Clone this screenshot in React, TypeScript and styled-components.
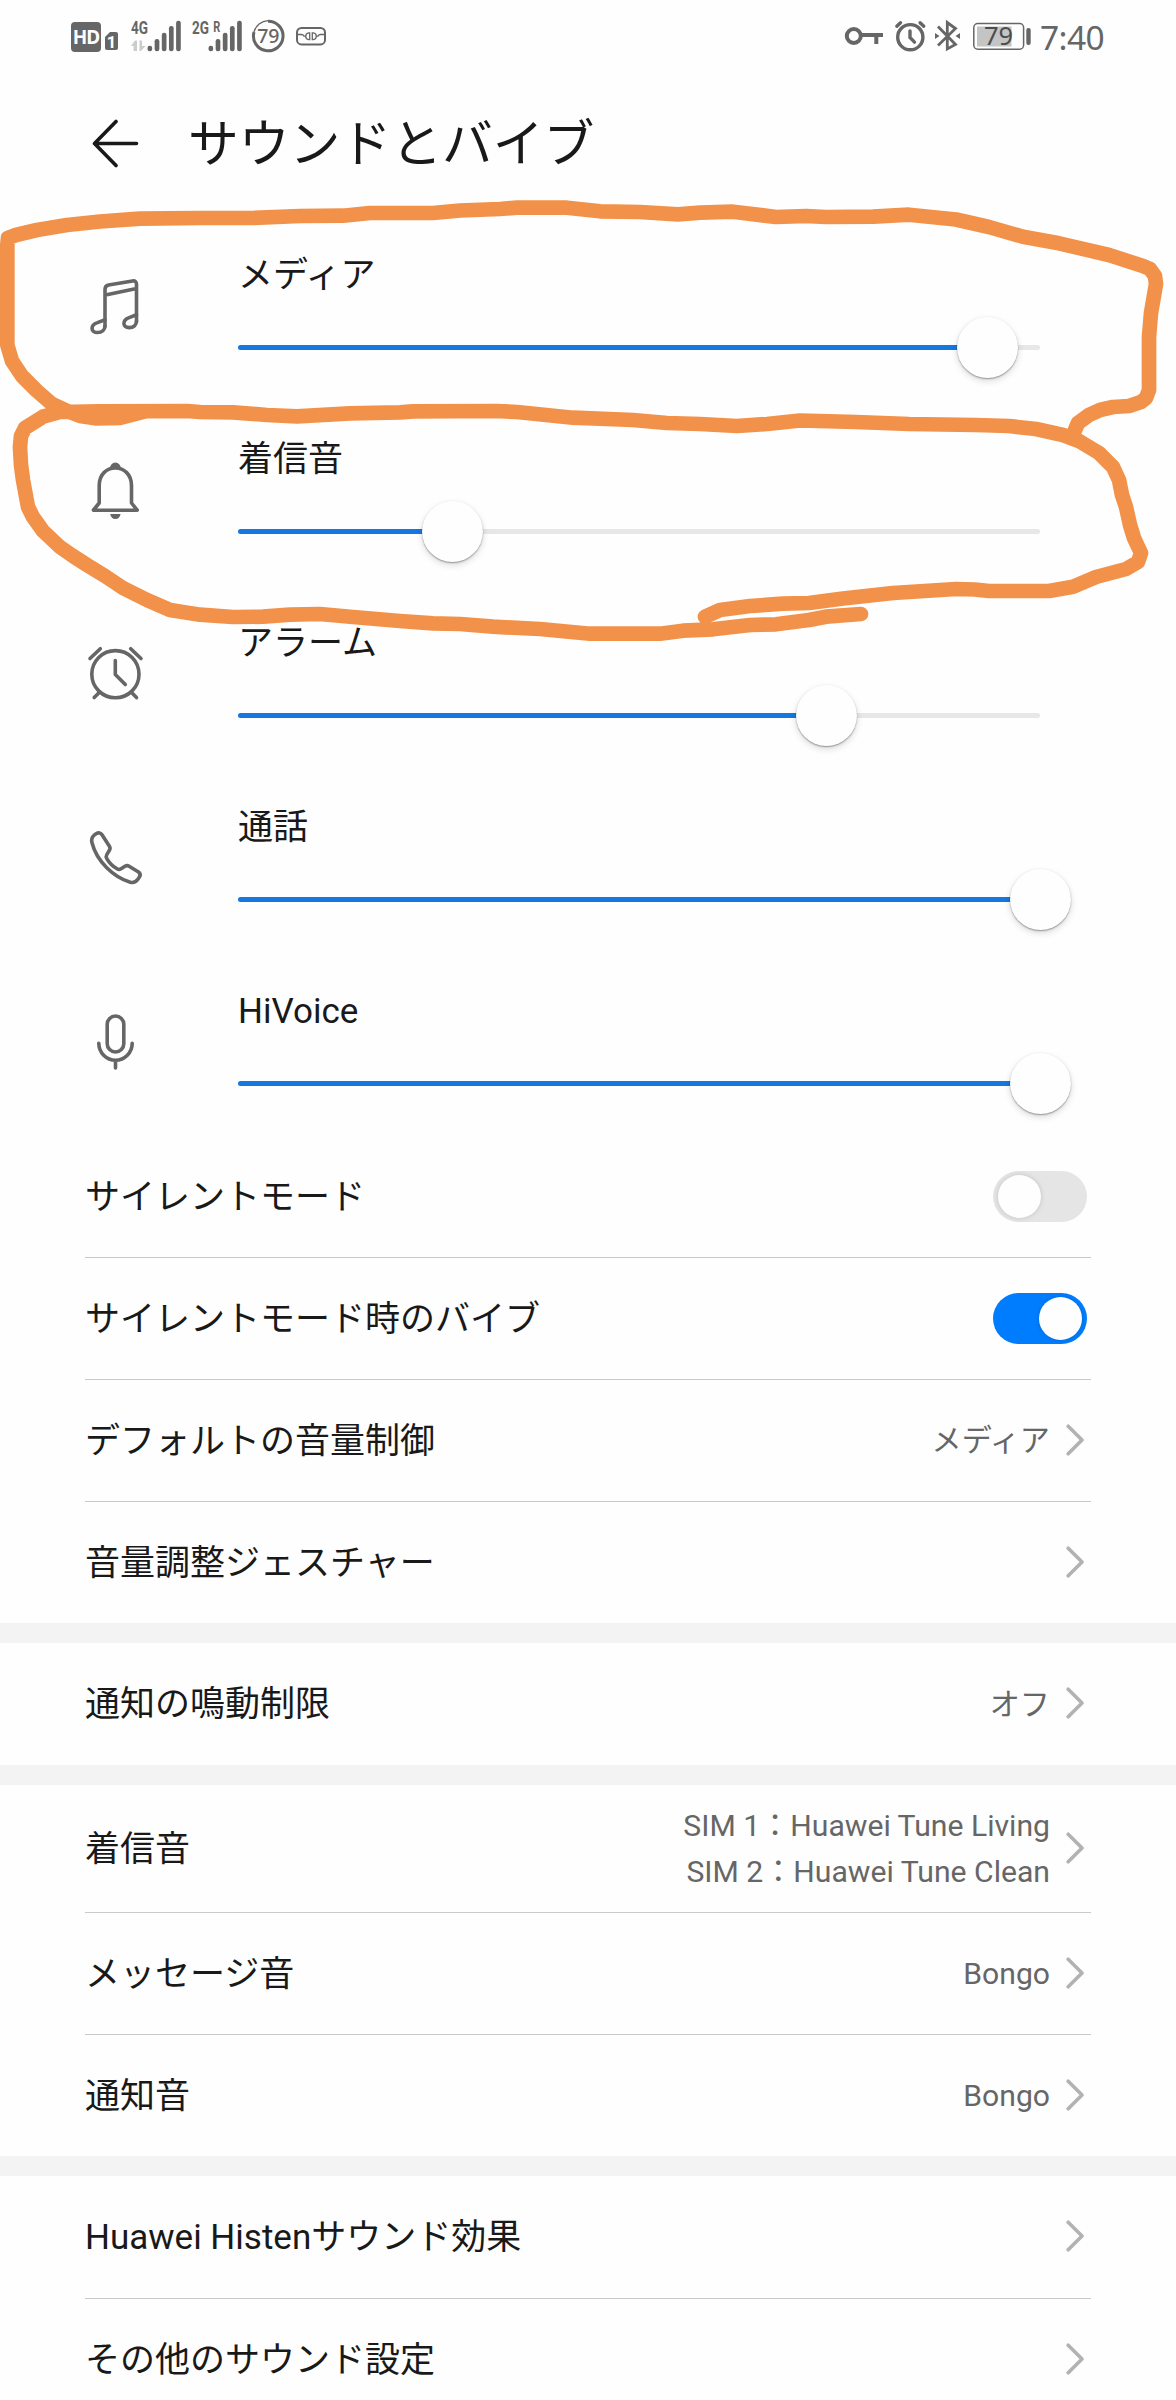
import React from "react";
import styled, { createGlobalStyle } from "styled-components";

const ink = "#191919";
const grey = "#666666";

const GlobalStyle = createGlobalStyle`
  html, body { margin: 0; padding: 0; background: #fefefe; }
  body { font-family: Roboto, "Noto Sans CJK JP", sans-serif; color: ${ink}; }
  * { box-sizing: border-box; }
`;

const Screen = styled.main`
  position: relative;
  width: 1176px;
  height: 2400px;
  overflow: hidden;
  background: #fefefe;
`;

/* ---------- status bar ---------- */

const StatusBar = styled.div`
  height: 72px;
  padding: 0 72px 0 71px;
  display: flex;
  justify-content: space-between;
`;

const StatusGroup = styled.div`
  display: flex;
  align-items: flex-start;
  color: ${grey};
`;

const StatusSvg = styled.svg<{ $gap?: number }>`
  display: block;
  height: 72px;
  margin-left: ${(p) => p.$gap ?? 0}px;
  overflow: visible;
`;

const HdBadge = styled.span`
  margin-top: 22px;
  width: 30px;
  height: 30px;
  border-radius: 4px;
  background: ${grey};
  color: #fefefe;
  font: 700 19px/30px "Noto Sans", sans-serif;
  letter-spacing: -0.9px;
  text-align: center;
`;

const Clock = styled.time`
  margin: 14px 0 0 9px;
  width: 64px;
  white-space: nowrap;
  font: 400 33.5px/46px "Noto Sans", sans-serif;
  letter-spacing: -0.6px;
`;

const barTops = [45.7, 39, 32.7, 26, 20.7];

function Signal({ label, suffix, arrows, gap }: { label: string; suffix?: string; arrows?: boolean; gap: number }) {
  return (
    <StatusSvg $gap={gap} width="50" viewBox="0 0 50 72" fill={grey}>
      <text x="0" y="34" fontFamily="Roboto" fontWeight="700" fontSize="17.5" textLength="17" lengthAdjust="spacingAndGlyphs">
        {label}
      </text>
      {suffix && (
        <text x="21.3" y="32" fontFamily="Roboto" fontWeight="700" fontSize="14.5" textLength="7" lengthAdjust="spacingAndGlyphs">
          {suffix}
        </text>
      )}
      {arrows && <path fill="#cccccc" d="M6 40.5V51H2.600V46H0L4 40.500ZM8.500 51V40.500h2.500V46h3.500L10 51Z" />}
      {barTops.map((top, i) => (
        <rect key={top} x={16.5 + i * 7.15} y={top} width="4.7" height={51.2 - top} rx="2.2" />
      ))}
    </StatusSvg>
  );
}

function StatusLeft() {
  return (
    <StatusGroup>
      <HdBadge>HD</HdBadge>
      <StatusSvg $gap={4.3} width="13" viewBox="0 0 13 72">
        <path fill={grey} d="M5 32h6q2 0 2 2v14q0 2-2 2H2q-2 0-2-2V37Z" />
        <text x="6.6" y="47.6" fill="#fefefe" fontFamily="Roboto" fontWeight="700" fontSize="16.5" textAnchor="middle">1</text>
      </StatusSvg>
      <Signal label="4G" arrows gap={12.7} />
      <Signal label="2G" suffix="R" gap={11.3} />
      <StatusSvg $gap={9.5} width="33" viewBox="0 0 33 72" fill="none" stroke={grey}>
        <path strokeWidth="3" d="M16 21.2A14.8 14.8 0 1 1 2 32" />
        <path strokeWidth="1.3" d="M2 32A15 15 0 0 1 16 20.6" />
        <text x="16.3" y="43.2" fill={grey} stroke="none" fontFamily="Noto Sans" fontWeight="500" fontSize="19.5" textAnchor="middle">79</text>
      </StatusSvg>
      <StatusSvg $gap={11} width="30" viewBox="0 0 30 72" fill="none" stroke={grey}>
        <rect x="1" y="28" width="28" height="16.4" rx="4.5" strokeWidth="2" />
        <path strokeWidth="1.3" d="M1 34.500h4.500q1.500 0 2.500 1.700h2M29 34.500h-4.500q-1.500 0-2.500 1.700h-2M13.700 32.800h-1q-3 .4-3 3.400t3 3.400h1ZM16.300 32.800h1q3 .4 3 3.400t-3 3.400h-1Z" />
      </StatusSvg>
    </StatusGroup>
  );
}

function StatusRight() {
  return (
    <StatusGroup>
      <StatusSvg width="38" viewBox="0 0 38 72" fill="none" stroke={grey} strokeWidth="4">
        <circle cx="8.8" cy="36" r="7" />
        <path d="M16 35h22M31.3 35v9" />
      </StatusSvg>
      <StatusSvg $gap={12} width="31" viewBox="0 0 31 72" fill="none" stroke={grey} strokeWidth="3.4" strokeLinecap="round">
        <circle cx="15.3" cy="37.2" r="12.6" />
        <path d="M15 31v6.5l4.5 4.6" />
        <path d="M1.8 26.2l3.7-3.5M28.8 26.2l-3.7-3.5" />
      </StatusSvg>
      <StatusSvg $gap={9} width="25" viewBox="0 0 25 72" fill="none" stroke={grey} strokeWidth="2.8">
        <path d="M3 26.5l17.5 18L12.3 49V22.5l8.2 6L3 45.5" />
        <path fill={grey} stroke="none" d="M0 33l4.5 3L0 39ZM25 33l-4.5 3 4.5 3Z" />
      </StatusSvg>
      <StatusSvg $gap={13} width="58" viewBox="0 0 58 72">
        <rect x=".8" y="23.6" width="49.8" height="25.6" rx="4" fill="none" stroke={grey} strokeWidth="1.5" />
        <rect x="4" y="26.5" width="34.5" height="20" fill="#c4c4c4" />
        <rect x="53.3" y="28" width="4.4" height="17" rx="2" fill={grey} />
        <text x="25.6" y="45.4" fill="#4d4d4d" fontFamily="Noto Sans" fontSize="25.5" textAnchor="middle">79</text>
      </StatusSvg>
      <Clock>7:40</Clock>
    </StatusGroup>
  );
}

/* ---------- title bar ---------- */

const TitleBar = styled.header`
  height: 144px;
  padding-left: 92px;
  display: flex;
  align-items: center;
`;

const Title = styled.h1`
  margin: 1px 0 0 49px;
  font-size: 50.8px;
  line-height: 76px;
  font-weight: 400;
`;

/* ---------- volume sliders ---------- */

const VolumeRow = styled.section`
  height: 184px;
  padding: 31px 136px 0 85px;
  display: grid;
  grid-template-columns: 60px 1fr;
  column-gap: 93px;
`;

const IconBox = styled.div`
  height: 120px;
  display: flex;
  align-items: center;
  color: ${grey};
`;

const VolumeLabel = styled.div`
  height: 55px;
  padding-top: 3px;
  font-size: 35px;
  line-height: 52px;
`;

const Track = styled.div`
  position: relative;
  margin-top: 43px;
  height: 5px;
  border-radius: 3px;
  background: #e7e7e7;
`;

const Fill = styled.div`
  height: 5px;
  border-radius: 3px;
  background: #1478e1;
`;

const Thumb = styled.div`
  position: absolute;
  top: -28px;
  width: 61px;
  height: 61px;
  margin-left: -30.5px;
  border-radius: 50%;
  background: #fefefe;
  box-shadow: 0 1px 1.5px rgba(0, 0, 0, 0.36), 0 3px 7px rgba(0, 0, 0, 0.14);
`;

const LineIcon = styled.svg.attrs({ width: 60, height: 60 })`
  fill: none;
  stroke: currentColor;
  stroke-width: 3.6;
  stroke-linecap: round;
  stroke-linejoin: round;
`;

const MusicIcon = () => (
  <LineIcon viewBox="0 0 60 60">
    <path d="M20 49.500V12.500q0-3.800 3.500-4.500L47.500 4q4-.6 4 3.300V45M20.500 18L51.500 11.500" />
    <path d="M20 42.800L12.500 45.600C5 48 5.500 55.500 12.500 55.500 17 55.500 20 53 20 49M51.500 37.800L44.200 40.600C37 43.200 37.300 50.600 44.200 50.600 48.700 50.600 51.500 48 51.500 44" />
  </LineIcon>
);

const BellIcon = () => (
  <LineIcon viewBox="0 4 60 60">
    <path d="M14.2 28.5C14.2 17.5 21.5 11 30.3 11S46.500 17.500 46.500 28.500V46l5.700 7.200H8.400L14.200 46Z" />
    <path fill="currentColor" stroke="none" d="M25 11a5.400 5.400 0 0 1 10.800 0ZM25.200 57h10.400q-1 5-5.200 5t-5.200-5Z" />
  </LineIcon>
);

const AlarmIcon = () => (
  <LineIcon viewBox="0 2 60 60">
    <circle cx="30.4" cy="31.2" r="23.6" />
    <path d="M30.3 17.500v14l10 10M5 15.500l10.300-9.800M56 15.500L45.700 5.700M14.500 49.300L9.200 54.600M46.300 49.300l5.200 5.300" />
  </LineIcon>
);

const PhoneIcon = () => (
  <LineIcon viewBox="0.3 1.5 60 60">
    <path d="M9.600 7.500l2.200-1.400c2-1.300 4.300-.8 5.500 1.100l7.400 11.500c.9 1.400.8 2.800 0 4.100l-2.600 4.300c-.8 1.300-.8 2.600 0 4 2.500 4.300 6 7.800 10.200 10.200 1.400.8 2.700.8 4 0l4-2.600c1.400-.8 2.700-.8 4.100 0l9 5.500c2.200 1.300 2.600 3.200 1.300 5.400l-1.500 2.200c-1.800 2.600-4.600 3.700-7.600 3C28.500 49.300 12 33.800 7.300 15.300c-.8-3 .1-5.900 2.300-7.800Z" />
  </LineIcon>
);

const MicIcon = () => (
  <LineIcon viewBox="0 4 60 60">
    <rect x="22.200" y="7" width="16.600" height="36" rx="8.300" />
    <path d="M13.800 34.300a16.700 17 0 0 0 33.400 0M30.500 51.500v7.500" />
  </LineIcon>
);

const volumes = [
  { name: "メディア", level: 93.4, Icon: MusicIcon },
  { name: "着信音", level: 26.7, Icon: BellIcon },
  { name: "アラーム", level: 73.35, Icon: AlarmIcon },
  { name: "通話", level: 100, Icon: PhoneIcon },
  { name: "HiVoice", level: 100, Icon: MicIcon },
];

/* ---------- settings list ---------- */

const Group = styled.section<{ $last?: boolean }>`
  padding: 0 85px;
  border-bottom: ${(p) => (p.$last ? 0 : 20)}px solid #f3f3f3;
`;

const Row = styled.div<{ $height?: number }>`
  height: ${(p) => p.$height ?? 122}px;
  display: flex;
  align-items: center;
  padding-right: 7px;
  &:not(:last-child) {
    border-bottom: 1px solid #c9c9c9;
  }
`;

const RowLabel = styled.span`
  flex: 1;
  padding-top: 2px;
  font-size: 35px;
  line-height: 52px;
`;

const Value = styled.span`
  margin-right: 16px;
  padding-top: 1px;
  color: ${grey};
  font-size: 30.15px;
  line-height: 46px;
  text-align: right;
  white-space: pre-line;
`;

const ChevronSvg = styled.svg`
  display: block;
  margin-bottom: 2px;
`;

const Chevron = () => (
  <ChevronSvg width="18" height="32" viewBox="0 0 18 32" fill="none" stroke="#b2b2b2" strokeWidth="3.6" strokeLinecap="round" strokeLinejoin="round">
    <path d="M2.200 2.200L16 16 2.200 29.800" />
  </ChevronSvg>
);

const Switch = styled.span<{ $on?: boolean }>`
  width: 94px;
  height: 51px;
  margin-right: -3px;
  padding: 0 5px;
  border-radius: 26px;
  display: flex;
  align-items: center;
  justify-content: ${(p) => (p.$on ? "flex-end" : "flex-start")};
  background: ${(p) => (p.$on ? "#007dff" : "#e5e5e5")};
`;

const Knob = styled.span`
  width: 43px;
  height: 43px;
  border-radius: 50%;
  background: #fefefe;
  box-shadow: 0 0 5px rgba(0, 0, 0, 0.16);
`;

/* ---------- freehand marker drawn over the page ---------- */

const Marker = styled.svg`
  position: absolute;
  left: 0;
  top: 0;
  pointer-events: none;
  fill: none;
  stroke: #f29149;
  stroke-width: 14.7;
  stroke-linecap: round;
  stroke-linejoin: round;
`;

const mediaLoop =
  "143,412 120,418 97,418.500 80,416 67,411 52,404 37,391 22,376 12,361 7.300,345 7.300,245 8,238 16,235 37,230 67,225 100,221.500 140,218.700 200,218 253,218 300,216 343,215.700 370,213 433,213 460,210.500 500,209 517,207.700 567,207.700 600,211.300 640,212 678,214.300 700,212.700 733,211.700 776,217 806,216 826,217 873,216.700 909,214.700 956,219.500 989,227 1023,236.700 1059,243.300 1109,255 1143,266 1150,269 1155,276 1156,284 1151,313 1149,337 1149,390 1146,398 1141,402 1129,406 1113,407 1100,410 1089,415 1078,423 1075,430";

const ringLoop =
  "861,614 826,616.700 809,620 776,624.300 750,625 713,629.300 683,630.700 660,633.700 590,633.700 540,629 493,626.700 460,624 433,623.300 400,621 353,617 320,614 290,614.700 263,616.700 233,617 200,614.700 170,610 147,600 123,588 105,576 87,565 73,556 60,547 43,531 33,517 28,507 23,480 21,465 20,447 21,436 25,428 43,416.700 60,412 100,411.300 187,411 200,412 233,412.300 267,415 297,416.300 350,413.300 400,412.300 413,411.300 497,411 517,412 573,417.700 633,420 667,423 700,424 737,426 767,424 800,420.500 856,422 909,424 976,425 1009,426 1036,429 1063,435 1079,441 1099,453 1113,467 1119,480 1122,495 1126,507 1130,525 1134,538 1141,553 1138,562 1126,569 1096,577 1073,586.700 1049,591 989,591 975,589.500 956,589 893,593 843,598.500 809,603 783,603.700 750,606 720,610 705,616.700";

function MarkerStrokes() {
  return (
    <Marker width="1176" height="660" viewBox="0 0 1176 660">
      <polyline points={mediaLoop} />
      <polyline points={ringLoop} />
    </Marker>
  );
}

export default function App() {
  return (
    <Screen lang="ja">
      <GlobalStyle />
      <StatusBar>
        <StatusLeft />
        <StatusRight />
      </StatusBar>

      <TitleBar>
        <svg width="47" height="50" viewBox="0 0 47 50" fill="none" stroke={ink} strokeWidth="3.600" strokeLinecap="round" strokeLinejoin="round">
          <path d="M24 2.500L2.500 24.500 24 46.500M3 24.500h41.500" />
        </svg>
        <Title>サウンドとバイブ</Title>
      </TitleBar>

      {volumes.map(({ name, level, Icon }) => (
        <VolumeRow key={name}>
          <IconBox>
            <Icon />
          </IconBox>
          <div>
            <VolumeLabel>{name}</VolumeLabel>
            <Track>
              <Fill style={{ width: `${level}%` }} />
              <Thumb style={{ left: `${level}%` }} />
            </Track>
          </div>
        </VolumeRow>
      ))}

      <Group>
        <Row>
          <RowLabel>サイレントモード</RowLabel>
          <Switch><Knob /></Switch>
        </Row>
        <Row>
          <RowLabel>サイレントモード時のバイブ</RowLabel>
          <Switch $on><Knob /></Switch>
        </Row>
        <Row>
          <RowLabel>デフォルトの音量制御</RowLabel>
          <Value>メディア</Value>
          <Chevron />
        </Row>
        <Row $height={121}>
          <RowLabel>音量調整ジェスチャー</RowLabel>
          <Chevron />
        </Row>
      </Group>

      <Group>
        <Row>
          <RowLabel>通知の鳴動制限</RowLabel>
          <Value>オフ</Value>
          <Chevron />
        </Row>
      </Group>

      <Group>
        <Row $height={128}>
          <RowLabel>着信音</RowLabel>
          <Value>{"SIM 1：Huawei Tune Living\nSIM 2：Huawei Tune Clean"}</Value>
          <Chevron />
        </Row>
        <Row>
          <RowLabel>メッセージ音</RowLabel>
          <Value>Bongo</Value>
          <Chevron />
        </Row>
        <Row $height={121}>
          <RowLabel>通知音</RowLabel>
          <Value>Bongo</Value>
          <Chevron />
        </Row>
      </Group>

      <Group $last>
        <Row $height={123}>
          <RowLabel>Huawei Histenサウンド効果</RowLabel>
          <Chevron />
        </Row>
        <Row>
          <RowLabel>その他のサウンド設定</RowLabel>
          <Chevron />
        </Row>
      </Group>

      <MarkerStrokes />
    </Screen>
  );
}
